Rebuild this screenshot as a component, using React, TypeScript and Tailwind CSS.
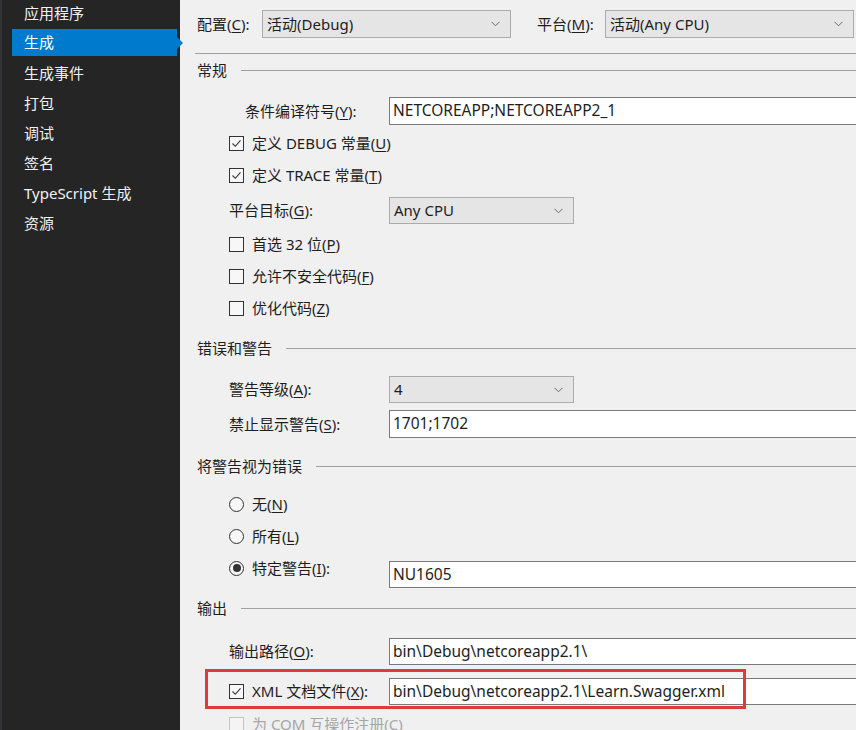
import React from "react";

const FONT = { fontFamily: '"Noto Sans", "Noto Sans CJK SC", sans-serif' };

function U({ c }: { c: string }) {
  return <span className="underline underline-offset-2">{c}</span>;
}

function Chevron() {
  return (
    <svg width="9" height="6" viewBox="0 0 9 6" className="shrink-0">
      <path d="M0.5 0.8 L4.5 4.8 L8.5 0.8" fill="none" stroke="#6a6a6a" strokeWidth="1" />
    </svg>
  );
}

function Combo({ text, w, h }: { text: string; w: string; h: string }) {
  return (
    <div
      className={`${w} ${h} shrink-0 flex items-center justify-between border border-[#acacac] bg-[#e5e5e5] pl-[4px] pr-[10px] text-[15px] text-[#1e1e1e]`}
    >
      <span>{text}</span>
      <Chevron />
    </div>
  );
}

function TextBox({ text, h = "h-[28px]" }: { text: string; h?: string }) {
  return (
    <div
      className={`w-[480px] shrink-0 ${h} flex items-center border border-[#7a7a7a] bg-white pl-[3px] text-[15.5px] text-[#1e1e1e]`}
    >
      {text}
    </div>
  );
}

function Box({ checked, disabled }: { checked?: boolean; disabled?: boolean }) {
  return (
    <div
      className={`w-[15px] h-[15px] shrink-0 border ${
        disabled ? "border-[#c4c4c4] bg-[#f4f4f4]" : "border-[#333333] bg-[#f7f7f7]"
      } flex items-center justify-center`}
    >
      {checked && (
        <svg width="11" height="11" viewBox="0 0 11 11">
          <path d="M1.5 5.5 L4.3 8.3 L9.5 2.3" fill="none" stroke="#333333" strokeWidth="1.1" />
        </svg>
      )}
    </div>
  );
}

function Radio({ checked }: { checked?: boolean }) {
  return (
    <div className="w-[15px] h-[15px] shrink-0 rounded-full border border-[#333333] bg-[#f7f7f7] flex items-center justify-center">
      {checked && <div className="w-[8px] h-[8px] rounded-full bg-[#333333]" />}
    </div>
  );
}

function Header({ text, cls }: { text: string; cls: string }) {
  return (
    <div className={`${cls} h-[20px] flex items-center text-[15px] text-[#1e1e1e]`}>
      <span className="shrink-0">{text}</span>
      <div className="ml-[14px] flex-1 h-px bg-[#a0a0a0]" />
    </div>
  );
}

function CheckRow({ children, checked }: { children: React.ReactNode; checked?: boolean }) {
  return (
    <div className="h-[32px] pl-[32px] flex items-center gap-[8px] text-[15px] text-[#1e1e1e]">
      <Box checked={checked} />
      <span>{children}</span>
    </div>
  );
}

const items = ["应用程序", "生成", "生成事件", "打包", "调试", "签名", "TypeScript 生成", "资源"];

export default function App() {
  return (
    <div className="w-[856px] h-[730px] flex overflow-hidden bg-[#f0f0f0]" style={FONT}>
      {/* sidebar */}
      <div className="w-[180px] shrink-0 h-full bg-[#252526] border-l-[2px] border-[#333337] relative z-10">
        <div className="-mt-[2px]">
          {items.map((it) => {
            const sel = it === "生成";
            return (
              <div key={it} className="h-[30px] relative">
                {sel ? (
                  <div className="absolute left-[10px] right-[3px] top-[1px] h-[27px] bg-[#007acc] flex items-center pl-[12px] text-[15px] text-white">
                    {it}
                    <div className="absolute right-[-6px] top-[7.5px] w-0 h-0 border-y-[6px] border-y-transparent border-l-[6px] border-l-[#007acc]" />
                  </div>
                ) : (
                  <div className="h-full flex items-center pl-[22px] text-[15px] text-[#f1f1f1]">{it}</div>
                )}
              </div>
            );
          })}
        </div>
      </div>

      {/* main */}
      <div className="flex-1 min-w-0 h-full overflow-hidden pl-[17px] flex flex-col">
        {/* top config row */}
        <div className="mt-[10px] h-[28px] flex items-center text-[15px] text-[#1e1e1e] shrink-0">
          <span className="w-[65px] shrink-0">
            配置(<U c="C" />):
          </span>
          <Combo text="活动(Debug)" w="w-[249px]" h="h-[28px]" />
          <span className="ml-[26px] w-[68px] shrink-0">
            平台(<U c="M" />):
          </span>
          <Combo text="活动(Any CPU)" w="w-[249px]" h="h-[28px]" />
        </div>
        <div className="mt-[15px] -ml-[2px] h-px bg-[#a0a0a0] shrink-0" />

        <Header text="常规" cls="mt-[6px] shrink-0" />
        <div className="mt-[17px] h-[28px] flex items-center text-[15px] text-[#1e1e1e] shrink-0">
          <span className="w-[192px] shrink-0 pl-[48px]">
            条件编译符号(<U c="Y" />):
          </span>
          <TextBox text="NETCOREAPP;NETCOREAPP2_1" />
        </div>
        <div className="mt-[2px] shrink-0">
          <CheckRow checked>
            定义 DEBUG 常量(<U c="U" />)
          </CheckRow>
          <CheckRow checked>
            定义 TRACE 常量(<U c="T" />)
          </CheckRow>
        </div>
        <div className="mt-[6px] h-[27px] flex items-center text-[15px] text-[#1e1e1e] shrink-0">
          <span className="w-[192px] shrink-0 pl-[32px]">
            平台目标(<U c="G" />):
          </span>
          <Combo text="Any CPU" w="w-[185px]" h="h-[27px]" />
        </div>
        <div className="mt-[4px] shrink-0">
          <CheckRow>
            首选 32 位(<U c="P" />)
          </CheckRow>
          <CheckRow>
            允许不安全代码(<U c="F" />)
          </CheckRow>
          <CheckRow>
            优化代码(<U c="Z" />)
          </CheckRow>
        </div>

        <Header text="错误和警告" cls="mt-[14px] shrink-0" />
        <div className="mt-[18px] h-[27px] flex items-center text-[15px] text-[#1e1e1e] shrink-0">
          <span className="w-[192px] shrink-0 pl-[32px]">
            警告等级(<U c="A" />):
          </span>
          <Combo text="4" w="w-[185px]" h="h-[27px]" />
        </div>
        <div className="mt-[7px] h-[28px] flex items-center text-[15px] text-[#1e1e1e] shrink-0">
          <span className="w-[192px] shrink-0 pl-[32px]">
            禁止显示警告(<U c="S" />):
          </span>
          <TextBox text="1701;1702" />
        </div>

        <Header text="将警告视为错误" cls="mt-[18px] shrink-0" />
        <div className="mt-[12px] shrink-0 text-[15px] text-[#1e1e1e]">
          <div className="h-[32px] pl-[32px] flex items-center gap-[8px]">
            <Radio />
            <span>
              无(<U c="N" />)
            </span>
          </div>
          <div className="h-[32px] pl-[32px] flex items-center gap-[8px]">
            <Radio />
            <span>
              所有(<U c="L" />)
            </span>
          </div>
          <div className="h-[32px] flex items-center">
            <div className="w-[192px] shrink-0 pl-[32px] flex items-center gap-[8px]">
              <Radio checked />
              <span>
                特定警告(<U c="I" />):
              </span>
            </div>
            <div className="self-start mt-[9px] shrink-0">
              <TextBox text="NU1605" h="h-[27px]" />
            </div>
          </div>
        </div>

        <Header text="输出" cls="mt-[14px] shrink-0" />
        <div className="mt-[20px] h-[27px] flex items-center text-[15px] text-[#1e1e1e] shrink-0">
          <span className="w-[192px] shrink-0 pl-[32px]">
            输出路径(<U c="O" />):
          </span>
          <TextBox text="bin\Debug\netcoreapp2.1\" h="h-[27px]" />
        </div>
        <div className="mt-[13px] h-[27px] flex items-center text-[15px] text-[#1e1e1e] shrink-0 relative">
          <div className="w-[192px] shrink-0 pl-[32px] flex items-center gap-[8px]">
            <Box checked />
            <span>
              XML 文档文件(<U c="X" />):
            </span>
          </div>
          <TextBox text="bin\Debug\netcoreapp2.1\Learn.Swagger.xml" h="h-[27px]" />
          <div className="absolute left-[8px] top-[-9px] w-[541px] h-[40px] border-[3px] border-[#e0393e] pointer-events-none" />
        </div>
        <div className="mt-[3px] h-[32px] pl-[32px] flex items-center gap-[8px] text-[15px] text-[#a6a6a6] shrink-0">
          <Box disabled />
          <span>为 COM 互操作注册(C)</span>
        </div>
      </div>
    </div>
  );
}
